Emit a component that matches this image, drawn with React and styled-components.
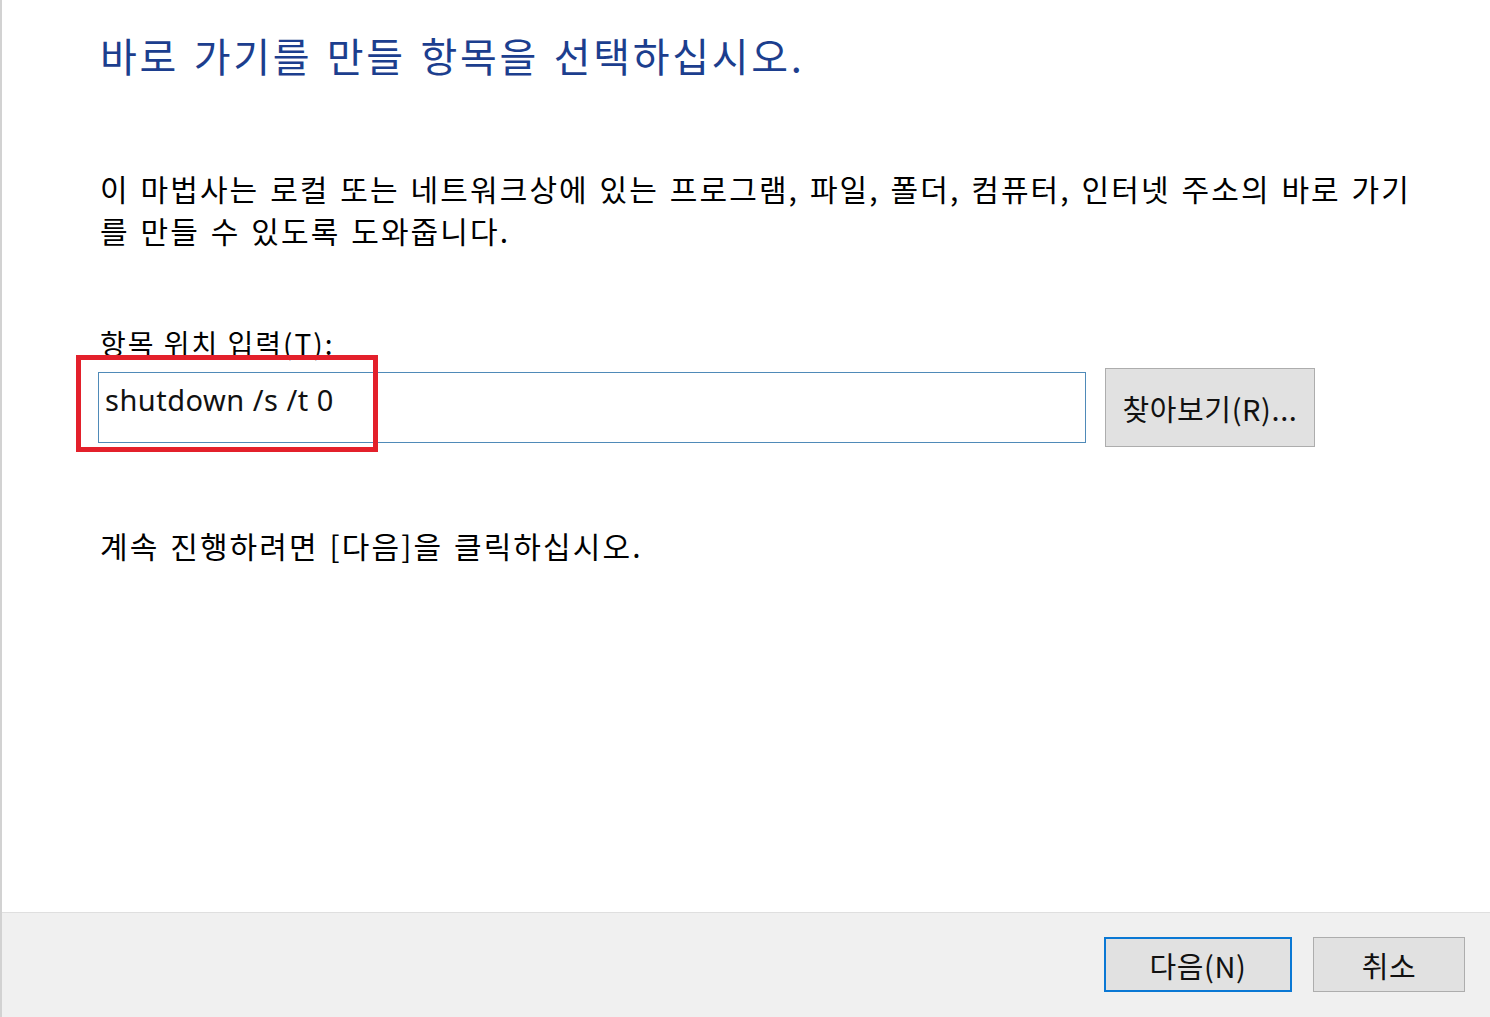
import styled, { createGlobalStyle } from "styled-components";

const GlobalStyle = createGlobalStyle`
  html, body {
    margin: 0;
    padding: 0;
    background: #ffffff;
  }
  body {
    font-family: "Noto Sans CJK KR", "Noto Sans", sans-serif;
    color: #000;
  }
`;

const Window = styled.div`
  position: relative;
  width: 1490px;
  height: 1017px;
  display: flex;
  flex-direction: column;
  border-left: 2px solid #d2d2d2;
  box-sizing: border-box;
  overflow: hidden;
`;

const Content = styled.div`
  flex: 1;
  padding: 26px 0 0 98px;
  display: flex;
  flex-direction: column;
`;

const Heading = styled.h1`
  margin: 0;
  font-size: 40px;
  font-weight: 400;
  line-height: 58px;
  letter-spacing: 2.7px;
  word-spacing: 3px;
  color: #1c3e8e;
`;

const Text = styled.p`
  margin: ${(p) => p.$top || 0}px 0 0 0;
  font-size: 30px;
  line-height: 42px;
  letter-spacing: 2.1px;
  word-spacing: 2px;
  width: ${(p) => p.$width || "auto"};
`;

const Label = styled.label`
  margin-top: 75px;
  font-size: 28px;
  line-height: 34px;
  letter-spacing: 2px;
`;

const InputRow = styled.div`
  position: relative;
  display: flex;
  align-items: center;
  gap: 19px;
  margin: 8px 0 0 -2px;
`;

const PathInput = styled.div`
  width: 988px;
  height: 71px;
  box-sizing: border-box;
  border: 1px solid #4f8ab8;
  padding: 8px 0 0 6px;
  font-family: "Noto Sans", "Open Sans", sans-serif;
  font-size: 29px;
  line-height: 38px;
  letter-spacing: 0.5px;
  color: #111;
`;

const Highlight = styled.div`
  position: absolute;
  left: -22px;
  top: -13px;
  width: 302px;
  height: 97px;
  box-sizing: border-box;
  border: 5px solid #e3202b;
  pointer-events: none;
`;

const Button = styled.button`
  box-sizing: border-box;
  width: ${(p) => p.$w}px;
  height: ${(p) => p.$h}px;
  background: #e1e1e1;
  border: ${(p) => (p.$primary ? "2px solid #0a78d4" : "1px solid #adadad")};
  font-family: "Noto Sans CJK KR", "Noto Sans", sans-serif;
  font-size: 29px;
  letter-spacing: 0.6px;
  color: #111;
  padding: 0;
  display: flex;
  align-items: center;
  justify-content: center;
`;

const Footer = styled.div`
  height: 105px;
  box-sizing: border-box;
  background: #f0f0f0;
  border-top: 1px solid #dfdfdf;
  display: flex;
  justify-content: flex-end;
  align-items: flex-start;
  gap: 21px;
  padding: 24px 25px 0 0;
`;

export default function App() {
  return (
    <>
      <GlobalStyle />
      <Window>
        <Content>
          <Heading>바로 가기를 만들 항목을 선택하십시오.</Heading>
          <Text $top={83} $width="1322px">
            이 마법사는 로컬 또는 네트워크상에 있는 프로그램, 파일, 폴더, 컴퓨터, 인터넷 주소의 바로 가기를 만들 수 있도록 도와줍니다.
          </Text>
          <Label>항목 위치 입력(T):</Label>
          <InputRow>
            <PathInput>shutdown /s /t 0</PathInput>
            <Button $w={210} $h={79}>찾아보기(R)...</Button>
            <Highlight />
          </InputRow>
          <Text $top={77}>계속 진행하려면 [다음]을 클릭하십시오.</Text>
        </Content>
        <Footer>
          <Button $w={188} $h={55} $primary>다음(N)</Button>
          <Button $w={152} $h={55}>취소</Button>
        </Footer>
      </Window>
    </>
  );
}
